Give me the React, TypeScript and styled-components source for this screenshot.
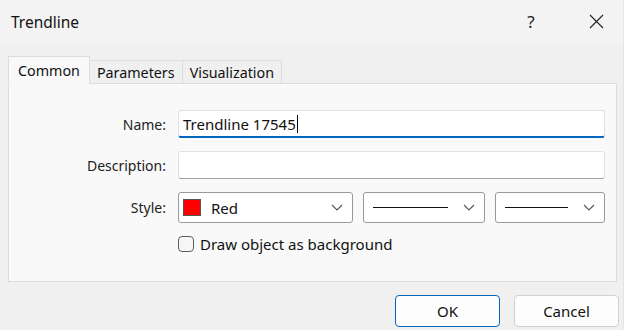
import styled, { createGlobalStyle } from 'styled-components';

const Global = createGlobalStyle`
    body {
        margin: 0;
        background: #ffffff;
        font-family: "Noto Sans", "Segoe UI", sans-serif;
        font-size: 14px;
        color: #1a1a1a;
    }
`;

const Dialog = styled.div`
    width: 624px;
    height: 330px;
    background: #f0f0f0;
    border-right: 1px solid #e4e4e4;
    box-sizing: border-box;
    display: flex;
    flex-direction: column;
`;

const TitleBar = styled.div`
    height: 43px;
    background: #f3f3f3;
    display: flex;
    align-items: center;
    gap: 15px;
    padding: 0 2px 0 11px;
    box-sizing: border-box;
`;

const Title = styled.div`
    flex: 1;
    font-size: 15.5px;
    color: #111;
    margin-top: 1px;
`;

const TitleButton = styled.div`
    width: 50px;
    height: 43px;
    display: flex;
    align-items: center;
    justify-content: center;
    font-size: 17px;
    color: #222;
`;

const Body = styled.div`
    flex: 1;
    padding: 13px 6px 0 8px;
    display: flex;
    flex-direction: column;
`;

const Tabs = styled.div`
    display: flex;
    align-items: flex-end;
    height: 28px;
    position: relative;
    z-index: 1;
`;

const Tab = styled.div<{ $active?: boolean }>`
    height: ${p => (p.$active ? 28 : 24)}px;
    padding: 0 ${p => (p.$active ? 9 : 7)}px;
    display: flex;
    align-items: center;
    background: ${p => (p.$active ? '#f9f9f9' : '#f0f0f0')};
    border: 1px solid #dcdcdc;
    border-bottom: ${p => (p.$active ? '1px solid #f9f9f9' : '1px solid #dcdcdc')};
    margin-right: -1px;
    box-sizing: border-box;
    font-size: 14.3px;
    color: #111;
`;

const Panel = styled.div`
    height: 199px;
    margin-top: -1px;
    background: #f9f9f9;
    border: 1px solid #dcdcdc;
    box-sizing: border-box;
    padding: 26px 11px 0 0;
    display: grid;
    grid-template-columns: 157px 1fr;
    column-gap: 12px;
    row-gap: 13px;
    align-items: center;
    align-content: start;
`;

const Label = styled.div`
    text-align: right;
    font-size: 14px;
    color: #222;
`;

const TextBox = styled.div<{ $focused?: boolean }>`
    height: 28px;
    background: #ffffff;
    border: 1px solid #e2e2e2;
    border-bottom: ${p => (p.$focused ? '2px solid #0067c0' : '1px solid #a0a0a0')};
    border-radius: 3px;
    box-sizing: border-box;
    display: flex;
    align-items: center;
    padding-left: 4px;
    font-size: 15px;
    color: #111;
`;

const Caret = styled.span`
    display: inline-block;
    width: 1px;
    height: 18px;
    background: #000;
    margin-left: 1px;
`;

const ComboRow = styled.div`
    display: flex;
    gap: 10px;
`;

const Combo = styled.div<{ $w: number }>`
    width: ${p => p.$w}px;
    height: 31px;
    background: #ffffff;
    border: 1px solid #9a9a9a;
    border-radius: 3px;
    box-sizing: border-box;
    display: flex;
    align-items: center;
    padding: 0 9px 0 4px;
    gap: 10px;
`;

const Swatch = styled.span`
    width: 18px;
    height: 17px;
    background: #ff0000;
    border: 1px solid #555;
    box-sizing: border-box;
`;

const ComboText = styled.span`
    flex: 1;
    font-size: 15px;
    color: #111;
`;

const LineSample = styled.span`
    flex: 1;
    height: 1.5px;
    background: #111;
    margin: 0 5px 0 5px;
`;

const CheckRow = styled.label`
    grid-column: 2;
    display: flex;
    align-items: center;
    gap: 6px;
    font-size: 15px;
    color: #111;
    margin-top: -2px;
`;

const CheckBox = styled.span`
    width: 16px;
    height: 16px;
    border: 1px solid #5f5f5f;
    border-radius: 4px;
    background: #f6f6f6;
    box-sizing: border-box;
`;

const Footer = styled.div`
    display: flex;
    justify-content: flex-end;
    gap: 14px;
    padding-top: 13px;
    margin-right: -2px;
`;

const Button = styled.div<{ $default?: boolean }>`
    width: 105px;
    height: 32px;
    background: #fdfdfd;
    border: 1px solid ${p => (p.$default ? '#0067c0' : '#d0d0d0')};
    border-radius: 4px;
    box-sizing: border-box;
    display: flex;
    align-items: center;
    justify-content: center;
    font-size: 15px;
    color: #111;
`;

const Chevron = () => (
    <svg width="12" height="7" viewBox="0 0 12 7">
        <path d="M1 1 L6 6 L11 1" stroke="#555" strokeWidth="1.1" fill="none" />
    </svg>
);

const CloseIcon = () => (
    <svg width="15" height="15" viewBox="0 0 15 15">
        <path d="M1 1 L14 14 M14 1 L1 14" stroke="#222" strokeWidth="1.1" fill="none" />
    </svg>
);

const App = () => (
    <>
        <Global />
        <Dialog>
            <TitleBar>
                <Title>Trendline</Title>
                <TitleButton>?</TitleButton>
                <TitleButton><CloseIcon /></TitleButton>
            </TitleBar>
            <Body>
                <Tabs>
                    <Tab $active>Common</Tab>
                    <Tab>Parameters</Tab>
                    <Tab>Visualization</Tab>
                </Tabs>
                <Panel>
                    <Label>Name:</Label>
                    <TextBox $focused>Trendline 17545<Caret /></TextBox>
                    <Label>Description:</Label>
                    <TextBox />
                    <Label>Style:</Label>
                    <ComboRow>
                        <Combo $w={175}>
                            <Swatch />
                            <ComboText>Red</ComboText>
                            <Chevron />
                        </Combo>
                        <Combo $w={122}>
                            <LineSample />
                            <Chevron />
                        </Combo>
                        <Combo $w={110}>
                            <LineSample />
                            <Chevron />
                        </Combo>
                    </ComboRow>
                    <CheckRow>
                        <CheckBox />
                        Draw object as background
                    </CheckRow>
                </Panel>
                <Footer>
                    <Button $default>OK</Button>
                    <Button>Cancel</Button>
                </Footer>
            </Body>
        </Dialog>
    </>
);

export default App;
